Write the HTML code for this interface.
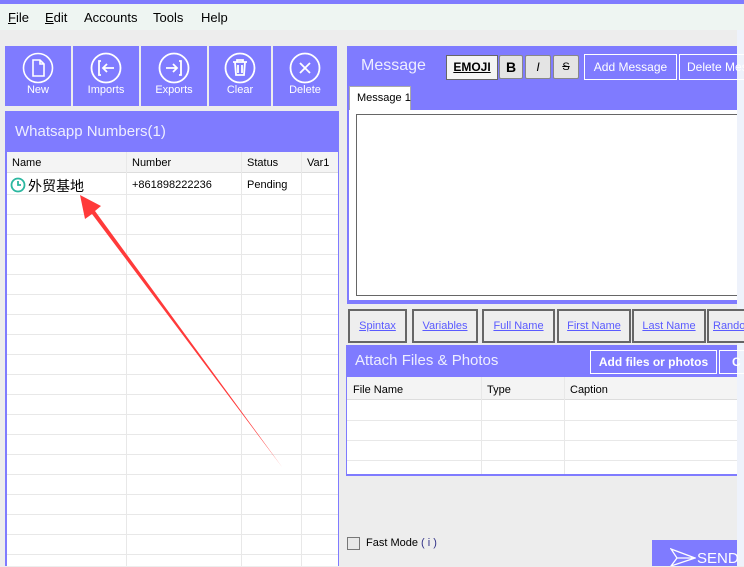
<!DOCTYPE html>
<html><head><meta charset="utf-8"><style>
*{margin:0;padding:0;box-sizing:border-box}
body{width:744px;height:566px;overflow:hidden;background:#ededed;font-family:"Liberation Sans","Noto Sans CJK SC",sans-serif;position:relative;font-size:12px}
.a{position:absolute;white-space:nowrap}
.p{background:#7f7bff}
.tb{position:absolute;top:46px;height:60px;background:#7f7bff;color:#fff;text-align:center;font-size:11px}
.tb svg{position:absolute;left:50%;top:6px;margin-left:-16px}
.tb span{position:absolute;left:0;right:0;top:38px}
.hl{position:absolute;height:1px;background:#e8e8e8}
.vl{position:absolute;width:1px;background:#e8e8e8}
.lk{position:absolute;top:309px;height:34px;border:2px solid #666;background:#eee;color:#5a5aff;text-decoration:underline;text-align:center;line-height:30px;font-size:11px;white-space:nowrap}
.g{font-size:11px}
</style></head><body>
<div class="a p" style="left:0;top:0;width:744px;height:4px"></div>
<div class="a" style="left:0;top:4px;width:744px;height:26px;background:#eef5f2;font-size:13px">
<span class="a" style="left:8px;top:6px"><u>F</u>ile</span>
<span class="a" style="left:45px;top:6px"><u>E</u>dit</span>
<span class="a" style="left:84px;top:6px">Accounts</span>
<span class="a" style="left:153px;top:6px">Tools</span>
<span class="a" style="left:201px;top:6px">Help</span>
</div>
<div class="a" style="left:737px;top:30px;width:7px;height:536px;background:#eef2fb"></div>

<div class="tb" style="left:5px;width:66px"><svg width="32" height="32" viewBox="0 0 32 32" fill="none" stroke="#fff" stroke-width="1.6"><circle cx="16" cy="16" r="14.5"/><path d="M11 8h7l4 4v12H11z M18 8v4h4"/></svg><span>New</span></div>
<div class="tb" style="left:73px;width:66px"><svg width="32" height="32" viewBox="0 0 32 32" fill="none" stroke="#fff" stroke-width="1.8"><circle cx="16" cy="16" r="14.5"/><path d="M11 9h-2v14h2 M24 16H13 M17 12l-4 4 4 4"/></svg><span>Imports</span></div>
<div class="tb" style="left:141px;width:66px"><svg width="32" height="32" viewBox="0 0 32 32" fill="none" stroke="#fff" stroke-width="1.8"><circle cx="16" cy="16" r="14.5"/><path d="M21 9h2v14h-2 M8 16h11 M15 12l4 4-4 4"/></svg><span>Exports</span></div>
<div class="tb" style="left:209px;width:62px"><svg width="32" height="32" viewBox="0 0 32 32" fill="none" stroke="#fff" stroke-width="1.8"><circle cx="16" cy="16" r="14.5"/><path d="M9 10h14 M13 10V8h6v2 M11 10l1 13h8l1-13 M14 13v8 M18 13v8"/></svg><span>Clear</span></div>
<div class="tb" style="left:273px;width:64px"><svg width="32" height="32" viewBox="0 0 32 32" fill="none" stroke="#fff" stroke-width="1.8"><circle cx="16" cy="16" r="14.5"/><path d="M11 11l10 10 M21 11L11 21"/></svg><span>Delete</span></div>

<div class="a p" style="left:5px;top:111px;width:334px;height:455px"></div>
<div class="a" style="left:15px;top:123px;color:#eef;font-size:15px">Whatsapp Numbers(1)</div>
<div class="a" style="left:7px;top:152px;width:331px;height:414px;background:#fff"></div>
<div class="a" style="left:7px;top:152px;width:331px;height:21px;background:#f4f4f4;border-bottom:1px solid #ddd"></div>
<div class="a g" style="left:12px;top:157px">Name</div>
<div class="a g" style="left:132px;top:157px">Number</div>
<div class="a g" style="left:247px;top:157px">Status</div>
<div class="a g" style="left:307px;top:157px">Var1</div>
<div class="vl" style="left:126px;top:152px;height:414px"></div>
<div class="vl" style="left:241px;top:152px;height:414px"></div>
<div class="vl" style="left:301px;top:152px;height:414px"></div>
<div id="rows"></div>
<svg class="a" style="left:10px;top:177px" width="16" height="16" viewBox="0 0 16 16" fill="none" stroke="#2bb7a0" stroke-width="1.8"><circle cx="8" cy="8" r="6.5"/><path d="M8 4v4h3"/></svg>
<div class="a" style="left:28px;top:176px;font-size:14px">外贸基地</div>
<div class="a g" style="left:132px;top:179px">+861898222236</div>
<div class="a g" style="left:247px;top:179px">Pending</div>

<div class="a p" style="left:347px;top:46px;width:390px;height:258px"></div>
<div class="a" style="left:361px;top:57px;color:#eef;font-size:16px">Message</div>
<div class="a" style="left:446px;top:55px;width:52px;height:25px;background:#f4f4f4;border:1px solid #666;font-weight:bold;text-decoration:underline;text-align:center;line-height:23px">EMOJI</div>
<div class="a" style="left:499px;top:55px;width:24px;height:24px;background:#e4e4e4;border:1px solid #888;border-radius:2px;font-weight:bold;font-size:14px;text-align:center;line-height:22px">B</div>
<div class="a" style="left:525px;top:55px;width:26px;height:24px;background:#e4e4e4;border:1px solid #888;border-radius:2px;font-style:italic;text-align:center;line-height:22px">I</div>
<div class="a" style="left:553px;top:55px;width:26px;height:24px;background:#e4e4e4;border:1px solid #888;border-radius:2px;text-decoration:line-through;text-align:center;line-height:22px;font-size:11px">S</div>
<div class="a" style="left:584px;top:54px;width:93px;height:26px;border:1px solid #fff;color:#fff;text-align:center;line-height:24px">Add Message</div>
<div class="a" style="left:679px;top:54px;width:70px;height:26px;border:1px solid #fff;color:#fff;line-height:24px;padding-left:7px;overflow:hidden">Delete Message</div>
<div class="a" style="left:349px;top:86px;width:62px;height:25px;background:#fff;border:1px solid #aaa;border-bottom:none;font-size:11px;padding:5px 0 0 7px">Message 1</div>
<div class="a" style="left:349px;top:110px;width:388px;height:190px;background:#fff"></div>
<div class="a" style="left:356px;top:114px;width:381px;height:182px;border:1px solid #666;border-right:none;background:#fff"></div>

<div class="lk" style="left:348px;width:59px">Spintax</div>
<div class="lk" style="left:412px;width:66px">Variables</div>
<div class="lk" style="left:482px;width:73px">Full Name</div>
<div class="lk" style="left:557px;width:74px">First Name</div>
<div class="lk" style="left:632px;width:74px">Last Name</div>
<div class="lk" style="left:707px;width:40px;text-align:left;padding-left:4px;overflow:hidden">Random</div>

<div class="a p" style="left:346px;top:345px;width:391px;height:131px"></div>
<div class="a" style="left:355px;top:352px;color:#eef;font-size:15px">Attach Files &amp; Photos</div>
<div class="a" style="left:590px;top:350px;width:127px;height:24px;border:1px solid #fff;color:#fff;font-weight:bold;text-align:center;line-height:22px">Add files or photos</div>
<div class="a" style="left:719px;top:350px;width:30px;height:24px;border:1px solid #fff;color:#fff;font-weight:bold;padding-left:12px;line-height:22px;overflow:hidden">C</div>
<div class="a" style="left:347px;top:377px;width:390px;height:97px;background:#fff"></div>
<div class="a" style="left:347px;top:377px;width:390px;height:23px;background:#f4f4f4;border-bottom:1px solid #ddd"></div>
<div class="a g" style="left:353px;top:384px">File Name</div>
<div class="a g" style="left:487px;top:384px">Type</div>
<div class="a g" style="left:570px;top:384px">Caption</div>
<div class="vl" style="left:481px;top:377px;height:97px"></div>
<div class="vl" style="left:564px;top:377px;height:97px"></div>
<div class="hl" style="left:347px;top:420px;width:390px"></div>
<div class="hl" style="left:347px;top:440px;width:390px"></div>
<div class="hl" style="left:347px;top:460px;width:390px"></div>

<div class="a" style="left:347px;top:537px;width:13px;height:13px;border:1px solid #777;background:#e8e8e8"></div>
<div class="a g" style="left:366px;top:537px">Fast Mode <span style="color:#338">( i )</span></div>
<div class="a p" style="left:652px;top:540px;width:85px;height:26px"></div>
<svg class="a" style="left:670px;top:548px" width="26" height="18" viewBox="0 0 26 18" fill="none" stroke="#fff" stroke-width="1.3"><path d="M1 1l24 9-24 8 6-8z M7 10h18"/></svg>
<div class="a" style="left:697px;top:550px;color:#fff;font-size:15px">SEND</div>

<svg class="a" style="left:0;top:0" width="744" height="566"><polygon points="80,195 101,206 95,211 282,467 92,214 85,219" fill="#ff3a3a"/></svg>
<script>
var r=document.getElementById('rows'),h='';
for(var y=194;y<566;y+=20)h+='<div class="hl" style="left:7px;top:'+y+'px;width:331px"></div>';
r.innerHTML=h;
</script>
</body></html>
